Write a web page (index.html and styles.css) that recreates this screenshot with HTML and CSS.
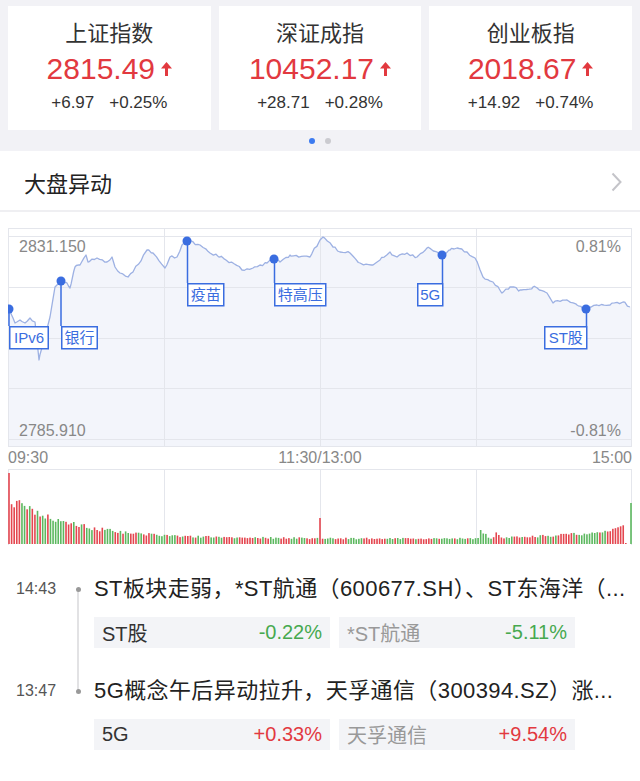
FILE: index.html
```html
<!DOCTYPE html>
<html lang="zh-CN">
<head>
    <meta charset="UTF-8">
    <title>大盘异动</title>
    <link rel="stylesheet" href="styles.css">
</head>
<body>
    <div class="indices">
        <div class="index-cards">
            <div class="index-card">
                <div class="index-name">上证指数</div>
                <div class="index-price">2815.49<svg class="up-arrow" viewBox="0 0 11 14"><polygon points="5.5,0 11,6.5 7,6.5 7,14 4,14 4,6.5 0,6.5"/></svg></div>
                <div class="index-change"><span>+6.97</span><span>+0.25%</span></div>
            </div>
            <div class="index-card">
                <div class="index-name">深证成指</div>
                <div class="index-price">10452.17<svg class="up-arrow" viewBox="0 0 11 14"><polygon points="5.5,0 11,6.5 7,6.5 7,14 4,14 4,6.5 0,6.5"/></svg></div>
                <div class="index-change"><span>+28.71</span><span>+0.28%</span></div>
            </div>
            <div class="index-card">
                <div class="index-name">创业板指</div>
                <div class="index-price">2018.67<svg class="up-arrow" viewBox="0 0 11 14"><polygon points="5.5,0 11,6.5 7,6.5 7,14 4,14 4,6.5 0,6.5"/></svg></div>
                <div class="index-change"><span>+14.92</span><span>+0.74%</span></div>
            </div>
        </div>
        <div class="pager">
            <span class="pager-dot active"></span>
            <span class="pager-dot"></span>
        </div>
    </div>

    <div class="section-header">
        <span>大盘异动</span>
        <svg class="chevron" viewBox="0 0 11 20"><polyline points="1.5,1.5 9.5,10 1.5,18.5"/></svg>
    </div>

    <div class="chart">
        <svg class="price-chart" viewBox="8 228 624 219">
            <polygon id="priceFill" class="price-fill" points=""/>
            <g class="grid">
                <rect x="8.5" y="228.5" width="623" height="218"/>
                <line x1="8" y1="236.5" x2="632" y2="236.5"/>
                <line x1="8" y1="287.5" x2="632" y2="287.5"/>
                <line x1="8" y1="338.5" x2="632" y2="338.5"/>
                <line x1="8" y1="388.5" x2="632" y2="388.5"/>
                <line x1="8" y1="439.5" x2="632" y2="439.5"/>
                <line x1="164.5" y1="228" x2="164.5" y2="447"/>
                <line x1="320.5" y1="228" x2="320.5" y2="447"/>
                <line x1="476.5" y1="228" x2="476.5" y2="447"/>
            </g>
            <polyline id="priceLine" class="price-line" points=""/>
            <g class="axis-text">
                <text x="19" y="252">2831.150</text>
                <text x="621" y="252" text-anchor="end">0.81%</text>
                <text x="19" y="436">2785.910</text>
                <text x="621" y="436" text-anchor="end">-0.81%</text>
            </g>
            <g class="marker">
                <line x1="9" y1="309" x2="9" y2="326"/>
                <circle cx="9" cy="309" r="4.5"/>
                <rect x="9.75" y="326.75" width="38.5" height="22"/>
                <text x="29" y="343">IPv6</text>
            </g>
            <g class="marker">
                <line x1="61" y1="281" x2="61" y2="326"/>
                <circle cx="61" cy="281" r="4.5"/>
                <rect x="61.75" y="326.75" width="35.5" height="22"/>
                <text x="79.5" y="343">银行</text>
            </g>
            <g class="marker">
                <line x1="187.5" y1="241" x2="187.5" y2="283"/>
                <circle cx="187" cy="241" r="4.5"/>
                <rect x="187.75" y="283.75" width="36" height="22"/>
                <text x="205.75" y="300">疫苗</text>
            </g>
            <g class="marker">
                <line x1="274.5" y1="259" x2="274.5" y2="283"/>
                <circle cx="274" cy="259" r="4.5"/>
                <rect x="274.75" y="283.75" width="51" height="22"/>
                <text x="300.25" y="300">特高压</text>
            </g>
            <g class="marker">
                <line x1="442.5" y1="255" x2="442.5" y2="283"/>
                <circle cx="442" cy="255" r="4.5"/>
                <rect x="417.75" y="283.75" width="25" height="22"/>
                <text x="430.25" y="300">5G</text>
            </g>
            <g class="marker">
                <line x1="586.5" y1="309" x2="586.5" y2="326"/>
                <circle cx="586" cy="309" r="4.5"/>
                <rect x="544.75" y="326.75" width="42" height="22"/>
                <text x="565.75" y="343">ST股</text>
            </g>
        </svg>
        <div class="time-axis">
            <span>09:30</span>
            <span>11:30/13:00</span>
            <span>15:00</span>
        </div>
        <svg class="volume-chart" viewBox="8 469 624 76">
            <g class="grid">
                <rect x="8.5" y="469.5" width="623" height="76"/>
                <line x1="164.5" y1="469" x2="164.5" y2="545"/>
                <line x1="320.5" y1="469" x2="320.5" y2="545"/>
                <line x1="476.5" y1="469" x2="476.5" y2="545"/>
            </g>
            <g id="volumeBars"></g>
        </svg>
    </div>

    <div class="events">
        <div class="event">
            <div class="event-time">14:43</div>
            <div class="event-rail"></div>
            <div class="event-body">
                <div class="event-title">ST板块走弱，*ST航通（600677.SH）、ST东海洋（...</div>
                <div class="event-tags">
                    <div class="tag"><span class="tag-name">ST股</span><span class="fall">-0.22%</span></div>
                    <div class="tag"><span class="tag-name stock">*ST航通</span><span class="fall">-5.11%</span></div>
                </div>
            </div>
        </div>
        <div class="event">
            <div class="event-time">13:47</div>
            <div class="event-rail"></div>
            <div class="event-body">
                <div class="event-title">5G概念午后异动拉升，天孚通信（300394.SZ）涨...</div>
                <div class="event-tags">
                    <div class="tag"><span class="tag-name">5G</span><span class="rise">+0.33%</span></div>
                    <div class="tag"><span class="tag-name stock">天孚通信</span><span class="rise">+9.54%</span></div>
                </div>
            </div>
        </div>
    </div>

    <script>
function rng(seed) {
    return function () {
        seed = seed + 0x6D2B79F5 | 0;
        let t = Math.imul(seed ^ seed >>> 15, 1 | seed);
        t = t + Math.imul(t ^ t >>> 7, 61 | t) ^ t;
        return ((t ^ t >>> 14) >>> 0) / 4294967296;
    };
}

// rough shape of the intraday line, page coordinates
const keys = [[9,309],[13,318],[15,323],[20,320],[25,323],[30,318],[35,322],[39,360],[45,336],[50,317],[55,287],[61,281],[67,283],[70,288],[75,267],[80,265],[86,255],[88,262],[97,258],[107,262],[112,257],[115,267],[120,273],[128,277],[133,272],[147,250],[153,253],[165,268],[170,257],[177,257],[182,245],[187,241],[200,245],[210,253],[220,257],[233,263],[242,270],[253,268],[267,263],[274,259],[280,262],[290,255],[310,257],[320,240],[323,237],[333,247],[340,252],[350,253],[360,263],[373,265],[380,260],[390,252],[397,257],[407,253],[417,257],[427,248],[437,252],[442,255],[450,250],[457,248],[467,252],[475,258],[483,277],[493,282],[502,293],[510,287],[520,290],[533,287],[547,293],[553,303],[567,300],[577,305],[586,309],[597,305],[610,305],[623,302],[630,307]];

function drawPrice() {
    const rand = rng(11);
    const pts = keys.map(p => [p[0], p[1]]);
    for (let i = 1; i < 240; i++) {
        const x = 9 + i * 621 / 240;
        let k = 0;
        while (k < keys.length - 2 && keys[k + 1][0] < x) k++;
        const [x0, y0] = keys[k], [x1, y1] = keys[k + 1];
        const t = Math.min(1, Math.max(0, (x - x0) / (x1 - x0)));
        const near = Math.min(Math.abs(x - x0), Math.abs(x - x1));
        if (near < 1) continue;
        pts.push([x, y0 + (y1 - y0) * t + (rand() - 0.5) * 3]);
    }
    pts.sort((a, b) => a[0] - b[0]);
    const line = pts.map(p => p[0].toFixed(1) + ',' + p[1].toFixed(1)).join(' ');
    document.getElementById('priceLine').setAttribute('points', line);
    document.getElementById('priceFill').setAttribute('points', '8,309 ' + line + ' 631,307 631,447 8,447');
}

function volumeAt(i) {
    if (i === 0) return 71;
    if (i === 120) return 26;
    if (i === 240) return 41;
    if (i === 239) return 0;
    if (i === 238) return 1;
    if (i < 120) return 5.5 + 38 * Math.exp(-(i - 1) / 24);
    if (i < 182) return 5.5;
    const bump = { 182: 14, 183: 11, 184: 9, 185: 7, 188: 11, 189: 9 };
    if (bump[i]) return bump[i];
    if (i >= 232) return 13 + (i - 232) * 1.3;
    return 6 + Math.pow((i - 182) / 50, 1.5) * 6;
}

function drawVolume() {
    const rand = rng(5);
    const group = document.getElementById('volumeBars');
    let red = true;
    let html = '';
    for (let i = 0; i <= 240; i++) {
        if (rand() < 0.35) red = !red;
        let colorRed = red;
        if (i === 0 || i === 120) colorRed = true;
        if (i === 240 || i === 182) colorRed = false;
        if (i >= 233 && i <= 238) colorRed = true;
        let h = volumeAt(i);
        if (i > 0 && i !== 120 && i !== 240) h *= 0.85 + rand() * 0.3;
        if (h <= 0) continue;
        const x = 8.2 + i * 622 / 240;
        html += `<rect x="${x.toFixed(2)}" y="${(544 - h).toFixed(1)}" width="1.6" height="${h.toFixed(1)}" fill="${colorRed ? '#e4464f' : '#5cb85f'}"/>`;
    }
    group.innerHTML = html;
}

drawPrice();
drawVolume();
    </script>
</body>
</html>
```

FILE: styles.css
```css
body {
    margin: 0;
    width: 640px;
    font-family: "Liberation Sans", "Noto Sans CJK SC", sans-serif;
    background: #fff;
    color: #222;
}

/* index cards */
.indices {
    background: #f2f2f6;
    padding: 6px 8px 0;
    height: 151px;
    box-sizing: border-box;
}
.index-cards {
    display: grid;
    grid-template-columns: repeat(3, 1fr);
    gap: 8px;
}
.index-card {
    background: #fff;
    height: 124px;
    padding-top: 14px;
    box-sizing: border-box;
    text-align: center;
}
.index-name {
    font-size: 22px;
    line-height: 28px;
    color: #333;
}
.index-price {
    margin-top: 3px;
    font-size: 30px;
    line-height: 36px;
    color: #e2393f;
    display: flex;
    justify-content: center;
    align-items: center;
    gap: 6px;
}
.up-arrow {
    width: 11px;
    height: 14px;
    fill: #e2393f;
}
.index-change {
    margin-top: 5px;
    font-size: 17px;
    line-height: 22px;
    color: #333;
    display: flex;
    justify-content: center;
    gap: 15px;
}
.pager {
    height: 21px;
    display: flex;
    justify-content: center;
    align-items: center;
    gap: 10px;
}
.pager-dot {
    width: 6px;
    height: 6px;
    border-radius: 50%;
    background: #cbcbd0;
}
.pager-dot.active {
    background: #3d7bf0;
}

/* section header */
.section-header {
    height: 61px;
    padding: 3px 18px 0 24px;
    box-sizing: border-box;
    border-bottom: 2px solid #efeff2;
    display: flex;
    justify-content: space-between;
    align-items: center;
    font-size: 22px;
    color: #222;
}
.chevron {
    width: 11px;
    height: 20px;
    fill: none;
    stroke: #c4c4c9;
    stroke-width: 2;
}

/* chart */
.chart {
    margin: 16px 8px 0;
}
.price-chart {
    display: block;
    width: 624px;
    height: 219px;
}
.volume-chart {
    display: block;
    width: 624px;
    height: 76px;
}
.grid rect,
.grid line {
    fill: none;
    stroke: #e4e6ec;
    stroke-width: 1;
}
.price-fill {
    fill: #f3f5fb;
}
.price-line {
    fill: none;
    stroke: #9db1e3;
    stroke-width: 1.3;
    stroke-linejoin: round;
}
.axis-text text {
    font-size: 16px;
    fill: #888;
}
.marker line {
    stroke: #3a6de0;
    stroke-width: 1.5;
}
.marker circle {
    fill: #3a6de0;
}
.marker rect {
    fill: #fff;
    stroke: #3a6de0;
    stroke-width: 1.5;
}
.marker text {
    font-size: 15px;
    fill: #3a6de0;
    text-anchor: middle;
}
.time-axis {
    height: 22px;
    line-height: 22px;
    display: flex;
    justify-content: space-between;
    font-size: 16px;
    color: #888;
}

/* event list */
.events {
    padding: 30px 0 0 16px;
}
.event {
    display: flex;
}
.event + .event {
    margin-top: 29px;
}
.event-time {
    flex: none;
    width: 50px;
    font-size: 16px;
    line-height: 28px;
    color: #555;
}
.event-rail {
    flex: none;
    width: 24px;
    position: relative;
}
.event-rail::before {
    content: "";
    position: absolute;
    left: 9.5px;
    top: 11.5px;
    width: 5px;
    height: 5px;
    border-radius: 50%;
    background: #999;
    z-index: 1;
}
.event:not(:last-child) .event-rail::after {
    content: "";
    position: absolute;
    left: 11px;
    top: 14px;
    width: 2px;
    height: 102px;
    background: #e2e2e4;
}
.event-body {
    margin-left: 4px;
    min-width: 0;
}
.event-title {
    font-size: 22px;
    line-height: 28px;
    letter-spacing: 0.4px;
    white-space: nowrap;
    color: #222;
}
.event-tags {
    margin-top: 14px;
    display: grid;
    grid-template-columns: 236px 236px;
    gap: 9px;
}
.tag {
    height: 31px;
    padding: 0 8px;
    background: #f3f4f7;
    display: flex;
    justify-content: space-between;
    align-items: center;
    font-size: 20px;
}
.tag-name {
    color: #333;
}
.tag-name.stock {
    color: #999;
}
.rise {
    color: #e2393f;
}
.fall {
    color: #47a94f;
}
```
